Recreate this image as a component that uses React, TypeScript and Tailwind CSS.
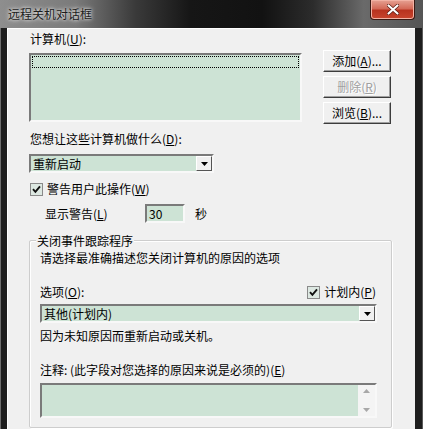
import React from 'react';

const font = "font-['Noto_Sans_CJK_SC','Noto_Sans_CJK_JP',sans-serif]";
const sunken =
  'border-2 border-t-[#7a7a7a] border-l-[#7a7a7a] border-b-[#f8f8f8] border-r-[#f8f8f8]';
const mint = 'bg-[#cde3d5]';
const btn =
  'w-[68px] h-[22px] flex items-center justify-center text-[12px] leading-[14px] bg-[#f0f0f0] border border-t-[#ffffff] border-l-[#ffffff] border-b-[#3c3c3c] border-r-[#3c3c3c] shadow-[inset_-1px_-1px_0_#a0a0a0]';

function CheckBox() {
  return (
    <span className="w-[13px] h-[13px] shrink-0 border border-[#8a8a8a] bg-[#dde8e2] flex items-center justify-center">
      <svg width="9" height="9" viewBox="0 0 9 9">
        <path d="M1 4.2 L3.4 6.8 L8 1.4" stroke="#111" strokeWidth="1.9" fill="none" />
      </svg>
    </span>
  );
}

function ArrowBox() {
  return (
    <span className="w-[16px] h-full shrink-0 bg-[#f0f0f0] border border-t-[#ffffff] border-l-[#ffffff] border-b-[#555555] border-r-[#555555] flex items-center justify-center">
      <svg width="7" height="4" viewBox="0 0 7 4">
        <path d="M0 0 H7 L3.5 4 Z" fill="#000" />
      </svg>
    </span>
  );
}

function Select({ value, width }: { value: string; width: string }) {
  return (
    <div className={`${width} h-[19px] ${sunken} ${mint} flex items-stretch`}>
      <span className="flex-1 pl-[2px] text-[12px] leading-[15px]">{value}</span>
      <ArrowBox />
    </div>
  );
}

export default function App() {
  return (
    <div
      className={`w-[423px] h-[429px] overflow-hidden bg-[#242424] flex flex-col text-black ${font}`}
    >
      {/* Title bar */}
      <div className="h-[28px] shrink-0 flex items-start justify-between bg-[linear-gradient(to_right,#8e8e8e_0%,#7a7a7a_18%,#3a3a3a_32%,#161616_45%,#121212_62%,#2c2c2c_74%,#6a6a6a_86%,#555555_100%)]">
        <span className="pl-[8px] pt-[6px] text-[12px] leading-[15px] text-[#1c1c1c] [text-shadow:0_0_5px_#e8e8e8,0_0_3px_#e8e8e8]">
          远程关机对话框
        </span>
        <div className="mr-[8px] w-[45px] h-[20px] rounded-b-[4px] border border-[#3a1a14] border-t-0 shadow-[inset_0_0_0_1px_#f2b2a4] bg-[linear-gradient(to_bottom,#e6a293_0%,#d46a58_45%,#b8331f_55%,#c8452e_100%)] flex items-center justify-center">
          <svg width="12" height="11" viewBox="0 0 12 11">
            <path d="M1.5 1.5 L10.5 9.5 M10.5 1.5 L1.5 9.5" stroke="#5a1a10" strokeWidth="3.6" strokeLinecap="round" />
            <path d="M1.5 1.5 L10.5 9.5 M10.5 1.5 L1.5 9.5" stroke="#ffffff" strokeWidth="2.2" strokeLinecap="round" />
          </svg>
        </div>
      </div>

      {/* Frame + content */}
      <div className="flex-1 flex">
        <div className="w-[7px] shrink-0 bg-[#1e1e1e] border-l border-[#6e6e6e]" />
        <div className="flex-1 bg-[#f0f0f0] border-l border-t border-white pl-[21px] text-[12px] leading-[14px]">
          <div className="mt-[3px] pl-[1px]">
            计算机(<u>U</u>):
          </div>

          <div className="mt-[4px] flex gap-[21px]">
            <div className={`mt-[3px] w-[273px] h-[69px] ${sunken} ${mint} p-[1px]`}>
              <div className="h-[12px] border border-dotted border-black" />
            </div>
            <div className="flex flex-col gap-[4px]">
              <div className={btn}>添加(<u>A</u>)...</div>
              <div className={`${btn} text-[#a0a0a0] [text-shadow:1px_1px_0_#ffffff]`}>删除(<u>R</u>)</div>
              <div className={btn}>浏览(<u>B</u>)...</div>
            </div>
          </div>

          <div className="mt-[8px] pl-[1px]">您想让这些计算机做什么(<u>D</u>):</div>

          <div className="mt-[8px]">
            <Select value="重新启动" width="w-[185px]" />
          </div>

          <div className="mt-[9px] flex items-center gap-[4px] pl-[1px]">
            <CheckBox />
            <span>警告用户此操作(<u>W</u>)</span>
          </div>

          <div className="mt-[8px] flex items-center h-[19px] pl-[16px]">
            <span className="w-[100px]">显示警告(<u>L</u>)</span>
            <div className={`w-[40px] h-[19px] ${sunken} ${mint} pl-[2px] leading-[15px]`}>30</div>
            <span className="ml-[10px]">秒</span>
          </div>

          {/* Group box */}
          <div className="relative mt-[17px] w-[363px] h-[188px] border border-[#cdcdcd] rounded-[2px] shadow-[inset_1px_1px_0_#ffffff,1px_1px_0_#ffffff] pl-[10px] pr-[14px] pt-[10px]">
            <span className="absolute -top-[7px] left-[6px] bg-[#f0f0f0] px-[1px]">关闭事件跟踪程序</span>
            <div>请选择最准确描述您关闭计算机的原因的选项</div>

            <div className="mt-[20px] flex items-center justify-between">
              <span>选项(<u>O</u>):</span>
              <span className="flex items-center gap-[4px] mr-[1px]">
                <CheckBox />
                <span>计划内(<u>P</u>)</span>
              </span>
            </div>

            <div className="mt-[5px]">
              <Select value="其他(计划内)" width="w-[337px]" />
            </div>

            <div className="mt-[6px]">因为未知原因而重新启动或关机。</div>

            <div className="mt-[20px]">注释: (此字段对您选择的原因来说是必须的)(<u>E</u>)</div>

            <div className={`mt-[6px] w-[337px] h-[35px] ${sunken} ${mint} flex justify-end`}>
              <div className="w-[17px] h-full bg-[#f4f4f4] flex flex-col items-center justify-between py-[4px]">
                <svg width="7" height="4" viewBox="0 0 7 4">
                  <path d="M3.5 0 L7 4 H0 Z" fill="#a8a8a8" />
                </svg>
                <svg width="7" height="4" viewBox="0 0 7 4">
                  <path d="M0 0 H7 L3.5 4 Z" fill="#a8a8a8" />
                </svg>
              </div>
            </div>
          </div>
        </div>
        <div className="w-[8px] shrink-0 bg-[#1e1e1e] border-r border-[#5a5a5a]" />
      </div>
    </div>
  );
}
